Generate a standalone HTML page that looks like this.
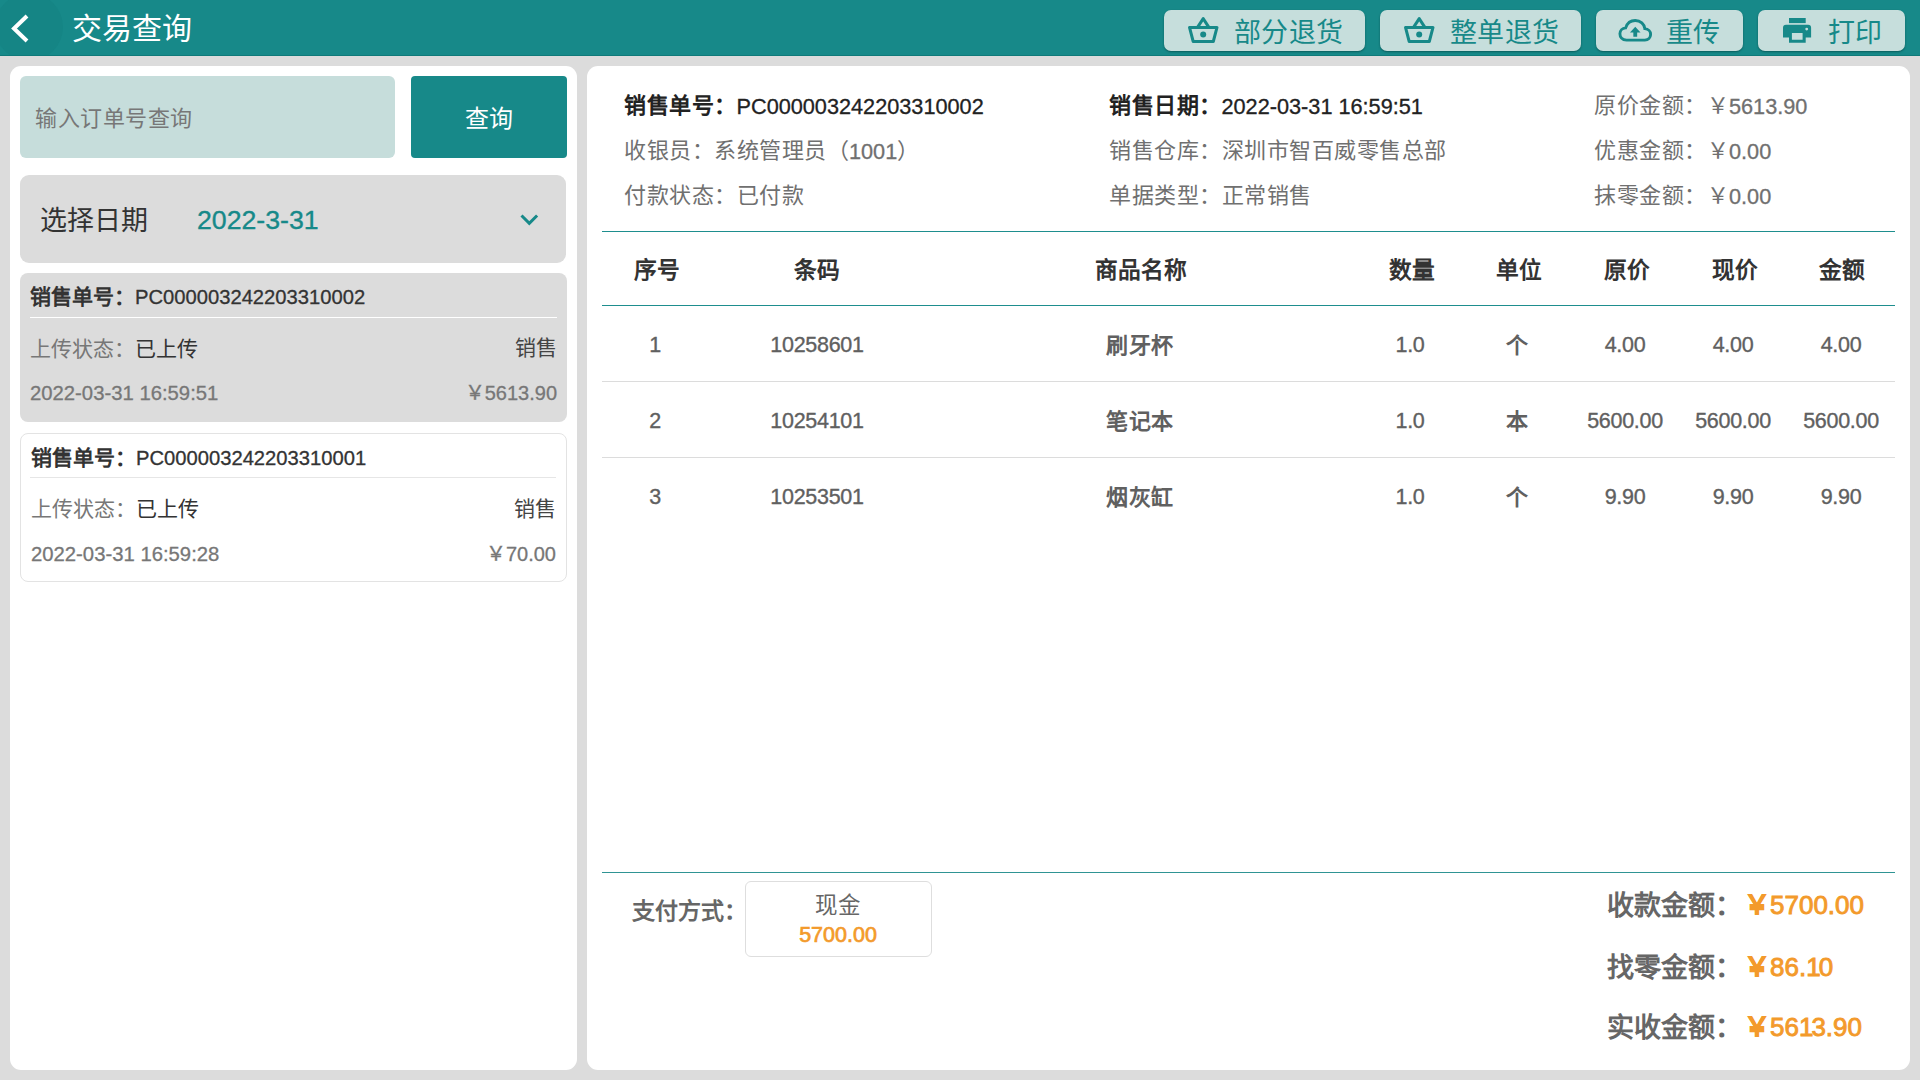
<!DOCTYPE html>
<html lang="zh-CN"><head><meta charset="utf-8">
<style>
*{margin:0;padding:0;box-sizing:border-box}
html,body{width:1920px;height:1080px;overflow:hidden;background:#dcdcdc;font-family:"Liberation Sans",sans-serif}
.a{position:absolute;white-space:nowrap}
#hdr{left:0;top:0;width:1920px;height:55px;background:#178989;overflow:hidden;box-shadow:0 1px 0 #0f7a7a}
#ripple{left:-5px;top:-7px;width:68px;height:68px;border-radius:50%;background:#158585}
#title{left:72px;top:9px;font-size:30px;color:#fff;line-height:40px}
.tb{top:10px;height:41px;background:#c6dedc;border-radius:7px;box-shadow:0 1px 2px rgba(0,60,60,.6);color:#178989;font-size:27px;line-height:41px}
.tb span{top:3px !important;letter-spacing:0.4px}
.tb svg{position:absolute}
.panel{background:#fff;border-radius:11px}
#lp{left:10px;top:66px;width:567px;height:1004px}
#rp{left:587px;top:66px;width:1323px;height:1004px}
#inp{left:20px;top:76px;width:375px;height:82px;background:#c6dddb;border-radius:6px;color:#777;font-size:22px;letter-spacing:0.5px;line-height:86px;padding-left:15px}
#qbtn{left:411px;top:76px;width:156px;height:82px;background:#178989;border-radius:4px;color:#fff;font-size:24px;line-height:86px;text-align:center}
#date{left:20px;top:175px;width:546px;height:88px;background:#dcdcdc;border-radius:9px}
.card{left:20px;width:547px;height:149px;border-radius:8px}
.c1{top:273px;background:#dcdcdc}
.c2{top:433px;background:#fff;border:1px solid #e3e3e3}
.card .t{left:10px;top:9px;font-size:21px;line-height:30px;color:#333}
.card .t .l{font-size:20.2px;-webkit-text-stroke:0.3px currentColor}
.card .div{left:10px;top:44px;width:527px;height:1px;background:#fff}
.c2 .div{background:#e6e6e6;left:9px;top:43px;width:526px}
.card .r2{left:10px;top:61px;font-size:21px;line-height:30px;color:#777}
.card .r2r{right:10px;top:60px;font-size:21px;line-height:30px;color:#444}
.card .r3{left:10px;top:105px;font-size:20.3px;-webkit-text-stroke:0.3px #777;line-height:30px;color:#777}
.card .r3r{right:10px;top:105px;font-size:20px;-webkit-text-stroke:0.3px #777;line-height:30px;color:#777}
.dk{color:#333}
.b{font-weight:bold}
.info{font-size:22px;letter-spacing:0.5px;line-height:30px;color:#707070}
.info .l{font-size:21.7px;letter-spacing:0;position:relative;top:1px;-webkit-text-stroke:0.3px currentColor}
.info.dk{color:#222}
.tl{height:1px;background:#1e8e8e}
.th{top:255px;font-size:22.7px;line-height:30px;color:#333;font-weight:bold;text-align:center;width:200px;margin-left:-100px}
.td{font-size:21.5px;letter-spacing:-0.3px;-webkit-text-stroke:0.35px #606060;line-height:30px;color:#606060;margin-top:-1px;text-align:center;width:200px;margin-left:-100px}
.td.b{font-size:22px;letter-spacing:0.5px;-webkit-text-stroke:0;margin-top:-0.5px}
.rl{left:602px;width:1293px;height:1px;background:#dcdcdc}

.sum{font-size:27px;line-height:36px;color:#666;font-weight:bold}
.org{color:#f39a2b !important}
.sv{font-weight:normal;-webkit-text-stroke:0.9px #f39a2b;font-size:26px}
.sv i{font-style:normal;letter-spacing:-2px}
</style></head><body>
<div class="a" id="hdr"><div class="a" id="ripple"></div></div>
<svg class="a" style="left:0;top:0" width="60" height="56"><path d="M27 16 L14 28.5 L27 41" stroke="#fff" stroke-width="4" fill="none" stroke-linecap="butt"/></svg>
<div class="a" id="title">交易查询</div>

<div class="a tb" style="left:1164px;width:201px">
 <svg style="left:0;top:0" width="60" height="41"><path d="M25.5 17.4 H53 L49.3 31.5 H29.2 Z" fill="none" stroke="#178989" stroke-width="3" stroke-linejoin="round"/><path d="M33.5 17.4 L39.2 8.6 L44.9 17.4" fill="none" stroke="#178989" stroke-width="3" stroke-linejoin="round"/><circle cx="39.2" cy="24.4" r="3" fill="#178989"/></svg>
 <span class="a" style="left:70px;top:0">部分退货</span></div>
<div class="a tb" style="left:1380px;width:201px">
 <svg style="left:0;top:0" width="60" height="41"><path d="M25.5 17.4 H53 L49.3 31.5 H29.2 Z" fill="none" stroke="#178989" stroke-width="3" stroke-linejoin="round"/><path d="M33.5 17.4 L39.2 8.6 L44.9 17.4" fill="none" stroke="#178989" stroke-width="3" stroke-linejoin="round"/><circle cx="39.2" cy="24.4" r="3" fill="#178989"/></svg>
 <span class="a" style="left:70px;top:0">整单退货</span></div>
<div class="a tb" style="left:1596px;width:147px">
 <svg style="left:21.5px;top:7.5px" width="34.5" height="25" viewBox="0 0 36 26"><path d="M9 23 C4 23 2 19.5 2 16.5 C2 13 4.5 10.5 8 10.2 C9.5 5.5 13.5 2.5 18 2.5 C23.5 2.5 27.5 6.5 28 11 C31.5 11.3 34 14 34 17 C34 20.5 31.5 23 28 23 Z" fill="none" stroke="#178989" stroke-width="3"/><path d="M18 9 L12.5 15 H16 V19.5 H20 V15 H23.5 Z" fill="#178989"/></svg>
 <span class="a" style="left:70px;top:0">重传</span></div>
<div class="a tb" style="left:1758px;width:147px">
 <svg style="left:0;top:0" width="60" height="41"><rect x="31" y="8" width="16.7" height="5.1" fill="#178989"/><path fill-rule="evenodd" d="M25 27.6 V17.8 A3 3 0 0 1 28 14.8 H50.1 A3 3 0 0 1 53.1 17.8 V27.6 H47.7 V32.8 H31 V27.6 Z M33.9 23 H44.6 V29.8 H33.9 Z" fill="#178989"/><circle cx="48.7" cy="19.1" r="1.4" fill="#c6dedc"/></svg>
 <span class="a" style="left:70px;top:0">打印</span></div>

<div class="a panel" id="lp"></div>
<div class="a panel" id="rp"></div>

<div class="a" id="inp">输入订单号查询</div>
<div class="a" id="qbtn">查询</div>
<div class="a" id="date">
  <span class="a dk" style="left:20px;top:27px;font-size:27px;line-height:38px">选择日期</span>
  <span class="a" style="left:177px;top:26px;font-size:26.7px;line-height:38px;color:#178989;-webkit-text-stroke:0.35px #178989">2022-3-31</span>
  <svg class="a" style="left:497px;top:36px" width="24" height="16"><path d="M4.5 4.5 L12.3 12.3 L20.1 4.5" stroke="#178989" stroke-width="3" fill="none"/></svg>
</div>

<div class="a card c1">
  <span class="a t"><b>销售单号：</b><span class="l">PC000003242203310002</span></span>
  <div class="a div"></div>
  <span class="a r2">上传状态：<span style="color:#333">已上传</span></span>
  <span class="a r2r">销售</span>
  <span class="a r3">2022-03-31 16:59:51</span>
  <span class="a r3r">￥5613.90</span>
</div>
<div class="a card c2">
  <span class="a t" style="left:10px;top:9px"><b>销售单号：</b><span class="l">PC000003242203310001</span></span>
  <div class="a div"></div>
  <span class="a r2" style="left:10px;top:60px">上传状态：<span style="color:#333">已上传</span></span>
  <span class="a r2r" style="right:10px;top:60px">销售</span>
  <span class="a r3" style="left:10px;top:105px">2022-03-31 16:59:28</span>
  <span class="a r3r" style="right:10px;top:105px">￥70.00</span>
</div>

<!-- info -->
<span class="a info dk" style="left:624px;top:91px"><b>销售单号：</b><span class="l">PC000003242203310002</span></span>
<span class="a info" style="left:624px;top:136px">收银员：系统管理员（<span class="l">1001</span>）</span>
<span class="a info" style="left:624px;top:181px">付款状态：已付款</span>
<span class="a info dk" style="left:1109px;top:91px"><b>销售日期：</b><span class="l">2022-03-31 16:59:51</span></span>
<span class="a info" style="left:1109px;top:136px">销售仓库：深圳市智百威零售总部</span>
<span class="a info" style="left:1109px;top:181px">单据类型：正常销售</span>
<span class="a info" style="left:1594px;top:91px">原价金额：￥<span class="l">5613.90</span></span>
<span class="a info" style="left:1594px;top:136px">优惠金额：￥<span class="l">0.00</span></span>
<span class="a info" style="left:1594px;top:181px">抹零金额：￥<span class="l">0.00</span></span>

<div class="a tl" style="left:602px;top:231px;width:1293px"></div>
<span class="a th" style="left:657px">序号</span>
<span class="a th" style="left:817px">条码</span>
<span class="a th" style="left:1141px">商品名称</span>
<span class="a th" style="left:1411.5px">数量</span>
<span class="a th" style="left:1518.5px">单位</span>
<span class="a th" style="left:1626.5px">原价</span>
<span class="a th" style="left:1734.5px">现价</span>
<span class="a th" style="left:1842px">金额</span>
<div class="a tl" style="left:602px;top:305px;width:1293px"></div>

<span class="a td" style="left:655px;top:331px">1</span>
<span class="a td" style="left:817px;top:331px">10258601</span>
<span class="a td b" style="left:1140px;top:331px">刷牙杯</span>
<span class="a td" style="left:1410px;top:331px">1.0</span>
<span class="a td b" style="left:1517px;top:331px">个</span>
<span class="a td" style="left:1625px;top:331px">4.00</span>
<span class="a td" style="left:1733px;top:331px">4.00</span>
<span class="a td" style="left:1841px;top:331px">4.00</span>
<div class="a rl" style="top:381px"></div>
<span class="a td" style="left:655px;top:407px">2</span>
<span class="a td" style="left:817px;top:407px">10254101</span>
<span class="a td b" style="left:1140px;top:407px">笔记本</span>
<span class="a td" style="left:1410px;top:407px">1.0</span>
<span class="a td b" style="left:1517px;top:407px">本</span>
<span class="a td" style="left:1625px;top:407px">5600.00</span>
<span class="a td" style="left:1733px;top:407px">5600.00</span>
<span class="a td" style="left:1841px;top:407px">5600.00</span>
<div class="a rl" style="top:457px"></div>
<span class="a td" style="left:655px;top:483px">3</span>
<span class="a td" style="left:817px;top:483px">10253501</span>
<span class="a td b" style="left:1140px;top:483px">烟灰缸</span>
<span class="a td" style="left:1410px;top:483px">1.0</span>
<span class="a td b" style="left:1517px;top:483px">个</span>
<span class="a td" style="left:1625px;top:483px">9.90</span>
<span class="a td" style="left:1733px;top:483px">9.90</span>
<span class="a td" style="left:1841px;top:483px">9.90</span>

<div class="a tl" style="left:602px;top:872px;width:1293px;background:#2f9494"></div>
<span class="a b" style="left:632px;top:895px;font-size:23px;line-height:32px;color:#666">支付方式：</span>
<div class="a" style="left:745px;top:881px;width:187px;height:76px;border:1.5px solid #dedede;border-radius:6px"></div>
<span class="a" style="left:838px;margin-left:-60px;width:120px;text-align:center;top:891px;font-size:22.5px;line-height:30px;color:#666">现金</span>
<span class="a org" style="left:838px;margin-left:-60px;width:120px;text-align:center;top:920px;font-size:21.5px;line-height:30px;-webkit-text-stroke:0.7px #f39a2b">5700.00</span>

<span class="a sum" style="left:1607px;top:888px">收款金额：</span>
<span class="a sum org sv" style="left:1744px;top:887px"><b>￥</b>5700.00</span>
<span class="a sum" style="left:1607px;top:950px">找零金额：</span>
<span class="a sum org sv" style="left:1744px;top:949px"><b>￥</b>86.<i>1</i>0</span>
<span class="a sum" style="left:1607px;top:1010px">实收金额：</span>
<span class="a sum org sv" style="left:1744px;top:1009px"><b>￥</b>56<i>1</i>3.90</span>
</body></html>
